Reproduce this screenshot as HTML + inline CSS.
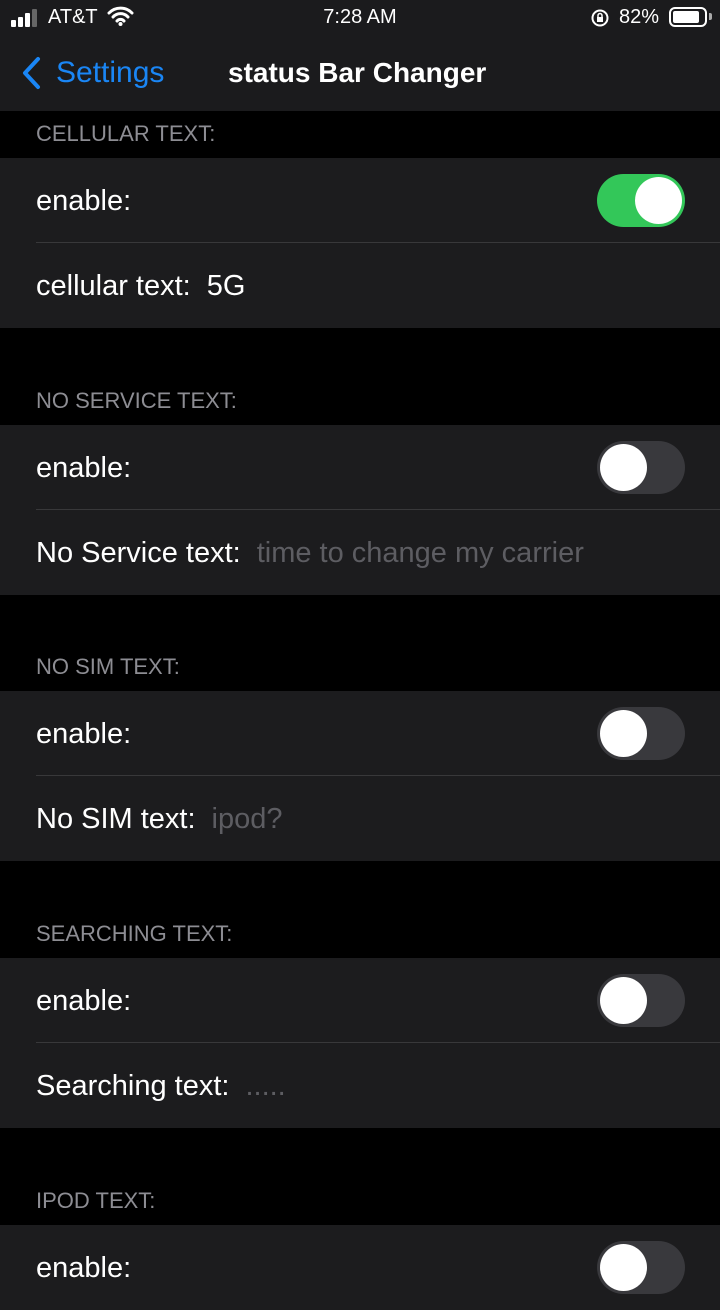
<!DOCTYPE html><html><head><style>
*{margin:0;padding:0;box-sizing:border-box}
body{width:720px;height:1280px;background:#000;font-family:"Liberation Sans",sans-serif;color:#fff;position:relative;overflow:hidden}
.abs{position:absolute}
.row{position:absolute;left:0;width:720px;height:85px;background:#1c1c1e}
.row .t{position:absolute;left:36px;top:27px;font-size:29px}
.row .v{margin-left:16px}
.row .p{color:#5d5d62;margin-left:16px}
.sep{position:absolute;left:36px;right:0;bottom:0;height:1px;background:#38383a}
.hd{position:absolute;left:36px;font-size:22px;color:#8d8d93}
.tg{position:absolute;left:597px;top:16px;width:88px;height:53px;border-radius:27px;background:#39393d}
.tg::after{content:"";position:absolute;left:3px;top:3px;width:47px;height:47px;border-radius:50%;background:#fff}
.tg.on{background:#33c759}.tg.on::after{left:38px}
</style></head><body>
<div class="abs" style="left:0;top:0;width:720px;height:111px;background:#1b1b1d"></div>
<div class="abs" style="left:11px;top:9px;width:45px;height:18px">
<div class="abs" style="left:0;top:11px;width:5px;height:7px;background:#fff;border-radius:1px"></div>
<div class="abs" style="left:7px;top:8px;width:5px;height:10px;background:#fff;border-radius:1px"></div>
<div class="abs" style="left:14px;top:4px;width:5px;height:14px;background:#fff;border-radius:1px"></div>
<div class="abs" style="left:21px;top:0;width:5px;height:18px;background:#666;border-radius:1px"></div>
</div>
<div class="abs" style="left:48px;top:6px;font-size:20px">AT&amp;T</div>
<svg class="abs" style="left:107px;top:6px" width="27" height="20" viewBox="0 0 27 20"><path d="M2 7a16 16 0 0 1 23 0M6 11a10 10 0 0 1 15 0M10 15a4.5 4.5 0 0 1 7 0" stroke="#fff" stroke-width="3" fill="none" stroke-linecap="round"/><circle cx="13.5" cy="18" r="2" fill="#fff"/></svg>
<div class="abs" style="left:0;width:720px;text-align:center;top:6px;font-size:20px">7:28 AM</div>
<svg class="abs" style="left:590px;top:8px" width="20" height="20" viewBox="0 0 20 20"><circle cx="10" cy="10" r="7.5" stroke="#fff" stroke-width="2" fill="none"/><rect x="7" y="9" width="6" height="5" fill="#fff"/><path d="M8 9V7.5a2 2 0 0 1 4 0V9" stroke="#fff" stroke-width="1.5" fill="none"/></svg>
<div class="abs" style="left:619px;top:6px;font-size:20px">82%</div>
<div class="abs" style="left:669px;top:7px;width:38px;height:20px;border:2px solid #fff;border-radius:6px;padding:2px"><div style="width:26px;height:12px;background:#fff;border-radius:2px"></div></div>
<div class="abs" style="left:709px;top:13px;width:3px;height:7px;background:#aaa;border-radius:0 2px 2px 0"></div>
<svg class="abs" style="left:20px;top:56px" width="22" height="34" viewBox="0 0 22 34"><path d="M18 3L5 17l13 14" stroke="#1a86f5" stroke-width="4" fill="none" stroke-linecap="round" stroke-linejoin="round"/></svg>
<div class="abs" style="left:56px;top:56px;font-size:30px;color:#1a86f5">Settings</div>
<div class="abs" style="left:228px;top:57px;font-size:28px;font-weight:bold">status Bar Changer</div>

<div class="hd" style="top:121px">CELLULAR TEXT:</div>
<div class="row" style="top:158px"><div class="t">enable:</div><div class="tg on"></div><div class="sep"></div></div>
<div class="row" style="top:243px"><div class="t">cellular text:<span class="v">5G</span></div></div>

<div class="hd" style="top:388px">NO SERVICE TEXT:</div>
<div class="row" style="top:425px"><div class="t">enable:</div><div class="tg"></div><div class="sep"></div></div>
<div class="row" style="top:510px"><div class="t">No Service text:<span class="p">time to change my carrier</span></div></div>

<div class="hd" style="top:654px">NO SIM TEXT:</div>
<div class="row" style="top:691px"><div class="t">enable:</div><div class="tg"></div><div class="sep"></div></div>
<div class="row" style="top:776px"><div class="t">No SIM text:<span class="p">ipod?</span></div></div>

<div class="hd" style="top:921px">SEARCHING TEXT:</div>
<div class="row" style="top:958px"><div class="t">enable:</div><div class="tg"></div><div class="sep"></div></div>
<div class="row" style="top:1043px"><div class="t">Searching text:<span class="p">.....</span></div></div>

<div class="hd" style="top:1188px">IPOD TEXT:</div>
<div class="row" style="top:1225px"><div class="t">enable:</div><div class="tg"></div></div>
</body></html>
